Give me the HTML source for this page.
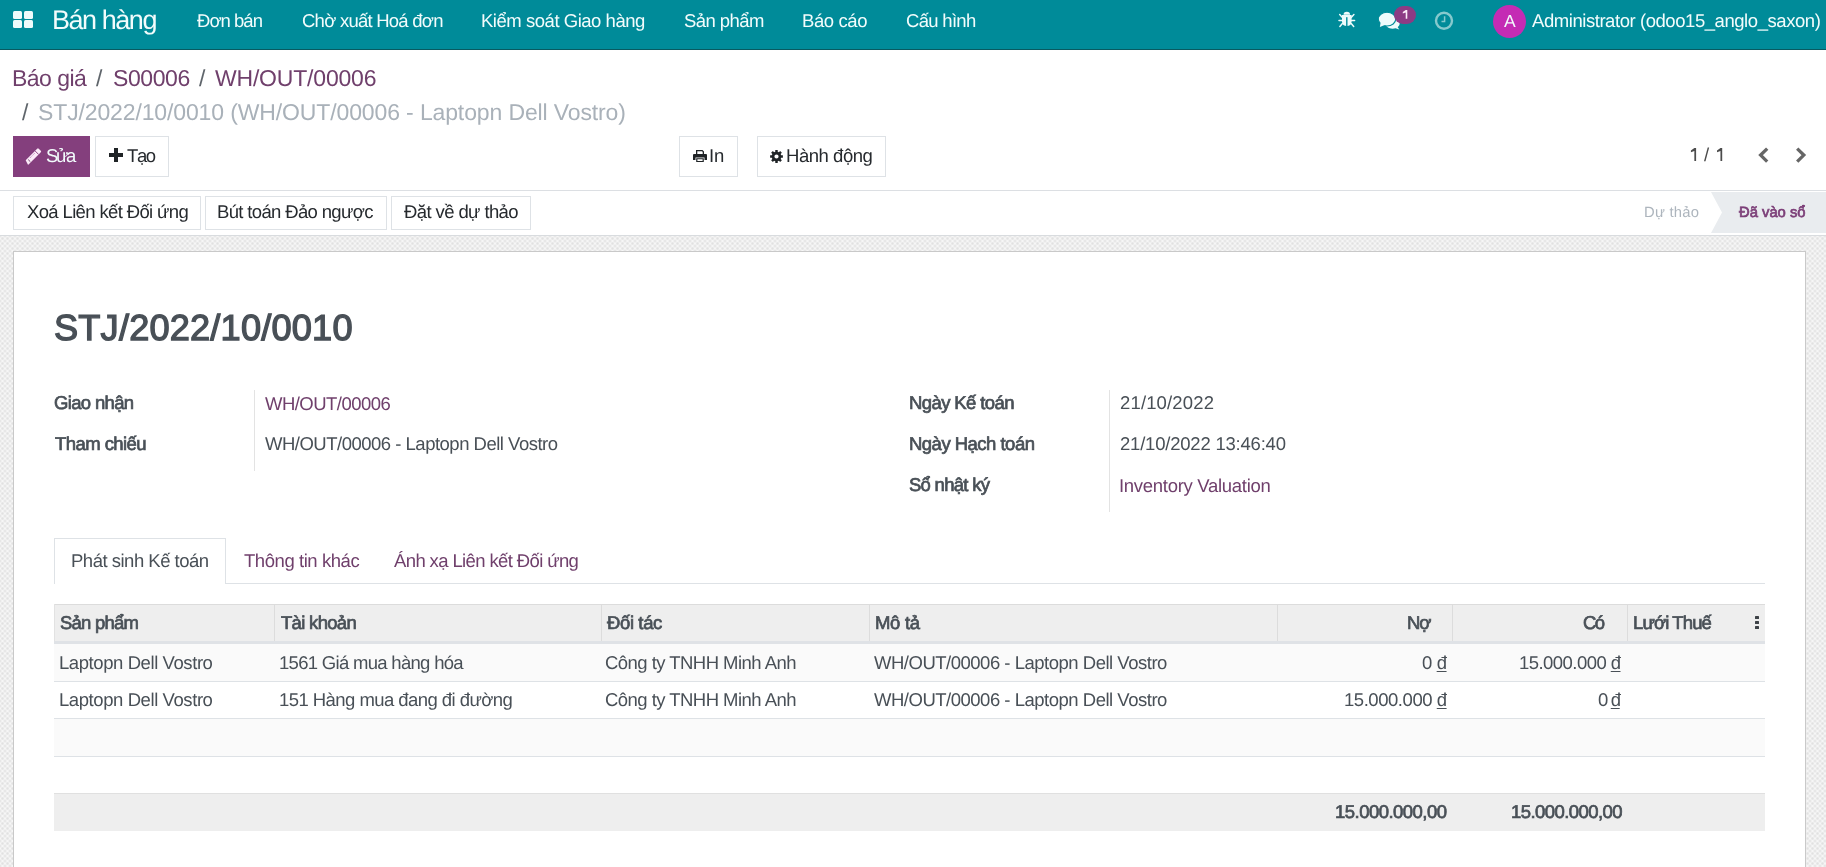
<!DOCTYPE html>
<html><head><meta charset="utf-8"><title>STJ/2022/10/0010</title>
<style>
html,body{margin:0;padding:0}
body{width:1826px;height:867px;overflow:hidden;position:relative;background:#fff;font-family:"Liberation Sans",sans-serif}
.b{position:absolute}
.t{position:absolute;white-space:nowrap;line-height:1;font-family:"Liberation Sans",sans-serif;text-rendering:geometricPrecision;will-change:transform}
</style></head><body>
<div class="b" style="left:0px;top:0px;width:1826px;height:49px;background:#008b99"></div>
<div class="b" style="left:0px;top:49px;width:1826px;height:1px;background:#085a61"></div>
<div class="b" style="left:13px;top:11px;width:9px;height:8px;background:#eefbfb;border-radius:1.5px"></div>
<div class="b" style="left:24px;top:11px;width:9px;height:8px;background:#eefbfb;border-radius:1.5px"></div>
<div class="b" style="left:13px;top:20px;width:9px;height:8px;background:#eefbfb;border-radius:1.5px"></div>
<div class="b" style="left:24px;top:20px;width:9px;height:8px;background:#eefbfb;border-radius:1.5px"></div>
<svg class="b" style="left:1335px;top:5px" width="85" height="30" viewBox="1335 5 85 30">
<g fill="#eefbfb"><path d="M1343.5 14.7 A3.3 3.0 0 0 1 1350.1 14.7 Z"/>
<path d="M1342 15.1 H1351.6 V21.5 C1351.6 24.6 1349.6 26.1 1346.8 26.1 C1344 26.1 1342 24.6 1342 21.5 Z"/></g>
<g stroke="#eefbfb" stroke-width="1.5" stroke-linecap="round"><path d="M1342.4 17.4 L1339.7 14.6 M1342.2 20.6 L1339 20.6 M1342.4 23.6 L1339.9 26.5 M1351.2 17.4 L1353.9 14.6 M1351.4 20.6 L1354.6 20.6 M1351.2 23.6 L1353.7 26.5"/></g>
<rect x="1346.1" y="17.2" width="1.4" height="9" fill="#008b99"/>
<path fill="#eefbfb" d="M1392.5 17.9 C1396.6 17.9 1399.7 20.3 1399.7 23.3 C1399.7 24.9 1398.9 26.2 1397.7 27.2 L1399.3 29.5 L1395.6 28.3 C1394.6 28.6 1393.6 28.7 1392.5 28.7 C1388.5 28.7 1385.3 26.3 1385.3 23.3 C1385.3 20.3 1388.5 17.9 1392.5 17.9 Z"/>
<ellipse cx="1387" cy="19.1" rx="8.75" ry="6.85" fill="#eefbfb" stroke="#008b99" stroke-width="1.1"/>
<path fill="#eefbfb" d="M1380.6 22.6 L1379.9 27.1 L1385.4 24.8 Z"/>
</svg>
<div class="b" style="left:1394px;top:6px;width:22px;height:18px;background:#8c3b84;border-radius:9px"></div>
<svg class="b" style="left:1400px;top:8px" width="10" height="13" viewBox="1400 8 10 13"><path fill="#fbeaf8" d="M1405.7 10.1 H1407.3 V18.7 H1405.7 V12.4 L1402.8 13.4 V12 Z"/></svg>
<svg class="b" style="left:1434px;top:11px" width="20" height="20" viewBox="0 0 20 20">
<circle cx="10" cy="9.7" r="8" fill="none" stroke="#86c9cd" stroke-width="2.4"/>
<path d="M10.6 5.2 V10.5 H7.5" fill="none" stroke="#86c9cd" stroke-width="1.5"/></svg>
<div class="b" style="left:1493px;top:4.5px;width:33px;height:33px;background:#c42bb4;border-radius:50%"></div>
<div class="b" style="left:13px;top:136px;width:77px;height:41px;background:#843f7d"></div>
<svg class="b" style="left:20px;top:142px" width="28" height="28" viewBox="20 142 28 28">
<g transform="translate(26.3 163.2) rotate(-45)">
<path fill="#fbeaf8" d="M0.3 2.5 Q0 2.5 0.1 2.1 L1.7 -2.6 H18 Q19.1 -2.6 19.1 -1.5 V1.4 Q19.1 2.5 18 2.5 Z"/>
<path d="M14.9 -2.7 V2.6" stroke="#843f7d" stroke-width="0.9"/>
<path d="M3.9 -1.2 V1.8" stroke="#5a2a56" stroke-width="0.8"/>
<path d="M6.6 -1.15 H12.9" stroke="#843f7d" stroke-width="0.6" stroke-dasharray="1 0.8"/>
</g></svg>
<div class="b" style="left:95px;top:136px;width:74px;height:41px;border:1px solid #dee2e6;box-sizing:border-box;background:#fff"></div>
<div class="b" style="left:108.5px;top:153px;width:14px;height:4px;background:#1f2326"></div>
<div class="b" style="left:113.5px;top:148px;width:4px;height:14px;background:#1f2326"></div>
<div class="b" style="left:679px;top:136px;width:59px;height:41px;border:1px solid #dee2e6;box-sizing:border-box;background:#fff"></div>
<svg class="b" style="left:692px;top:149px" width="16" height="14" viewBox="0 0 16 14">
<path fill="#1f2326" d="M4 1 H10.5 L12 2.5 V5 H4 Z M5.3 2.2 V5 H10.7 V3 L10 2.2 Z"/>
<path fill="#1f2326" d="M1 6 Q1 5 2 5 H14 Q15 5 15 6 V11 H12.5 V8.5 H3.5 V11 H1 Z"/>
<path fill="#1f2326" d="M4.2 9.3 H11.8 V13 H4.2 Z M5.4 10.3 V12 H10.6 V10.3 Z"/></svg>
<div class="b" style="left:757px;top:136px;width:129px;height:41px;border:1px solid #dee2e6;box-sizing:border-box;background:#fff"></div>
<svg class="b" style="left:770px;top:150px" width="13" height="13" viewBox="0 0 12.4 12.4">
<path fill="#1f2326" fill-rule="evenodd" d="M12.29 5.02 L12.29 7.38 L10.65 7.35 L10.16 8.53 L11.34 9.67 L9.67 11.34 L8.53 10.16 L7.35 10.65 L7.38 12.29 L5.02 12.29 L5.05 10.65 L3.87 10.16 L2.73 11.34 L1.06 9.67 L2.24 8.53 L1.75 7.35 L0.11 7.38 L0.11 5.02 L1.75 5.05 L2.24 3.87 L1.06 2.73 L2.73 1.06 L3.87 2.24 L5.05 1.75 L5.02 0.11 L7.38 0.11 L7.35 1.75 L8.53 2.24 L9.67 1.06 L11.34 2.73 L10.16 3.87 L10.65 5.05 Z M8.2 6.2 A2 2 0 1 0 4.2 6.2 A2 2 0 1 0 8.2 6.2 Z"/></svg>
<svg class="b" style="left:1685px;top:145px" width="45" height="20" viewBox="1685 145 45 20"><path fill="#4c4c4c" d="M1694.35 148.1 H1696.10 V160.9 H1694.35 V150.9 L1690.90 152.2 V150.5 Z"/></svg>
<svg class="b" style="left:1685px;top:145px" width="45" height="20" viewBox="1685 145 45 20"><path fill="#4c4c4c" d="M1720.45 148.1 H1722.20 V160.9 H1720.45 V150.9 L1717.00 152.2 V150.5 Z"/></svg>
<svg class="b" style="left:1757px;top:147px" width="13" height="17" viewBox="0 0 13 17">
<path d="M10.2 1.6 L3.6 8.1 L10.2 14.6" fill="none" stroke="#666666" stroke-width="3.3"/></svg>
<svg class="b" style="left:1794px;top:147px" width="13" height="17" viewBox="0 0 13 17">
<path d="M3.2 1.6 L9.8 8.1 L3.2 14.6" fill="none" stroke="#666666" stroke-width="3.3"/></svg>
<div class="b" style="left:0px;top:190px;width:1826px;height:1px;background:#dcdfe3"></div>
<div class="b" style="left:13px;top:196px;width:188px;height:34px;border:1px solid #dee2e6;box-sizing:border-box;background:#fff"></div>
<div class="b" style="left:205px;top:196px;width:182px;height:34px;border:1px solid #dee2e6;box-sizing:border-box;background:#fff"></div>
<div class="b" style="left:391px;top:196px;width:140px;height:34px;border:1px solid #dee2e6;box-sizing:border-box;background:#fff"></div>
<svg class="b" style="left:1710px;top:192px" width="116" height="41" viewBox="0 0 116 41">
<path d="M1 0 H116 V41 H1 L12 20.5 Z" fill="#e9ecef"/></svg>
<div class="b" style="left:0px;top:235px;width:1826px;height:1px;background:#d9dcdf"></div>
<div class="b" style="left:0px;top:236px;width:1826px;height:631px;background-color:#f6f6f6;background-image:radial-gradient(circle,#e1e1e1 0.6px,rgba(225,225,225,0) 1.9px),radial-gradient(circle,#e1e1e1 0.6px,rgba(225,225,225,0) 1.9px);background-size:5px 5px;background-position:0 0,2.5px 2.5px"></div>
<div class="b" style="left:13px;top:251px;width:1793px;height:640px;background:#fff;border:1px solid #c9c9c9;box-sizing:border-box"></div>
<div class="b" style="left:254px;top:390px;width:1px;height:81px;background:#e3e3e3"></div>
<div class="b" style="left:1109px;top:390px;width:1px;height:122px;background:#e3e3e3"></div>
<div class="b" style="left:54px;top:583px;width:1711px;height:1px;background:#dee2e6"></div>
<div class="b" style="left:54px;top:538px;width:172px;height:46px;border:1px solid #dee2e6;border-bottom:none;box-sizing:border-box;background:#fff"></div>
<div class="b" style="left:54px;top:604px;width:1711px;height:37px;background:#eeeeee"></div>
<div class="b" style="left:54px;top:604px;width:1711px;height:1px;background:#dcdcdc"></div>
<div class="b" style="left:54px;top:604px;width:1px;height:37px;background:#e2e2e2"></div>
<div class="b" style="left:54px;top:641px;width:1711px;height:3px;background:#dfe2e6"></div>
<div class="b" style="left:274px;top:604px;width:1px;height:37px;background:#dcdcdc"></div>
<div class="b" style="left:601px;top:604px;width:1px;height:37px;background:#dcdcdc"></div>
<div class="b" style="left:869px;top:604px;width:1px;height:37px;background:#dcdcdc"></div>
<div class="b" style="left:1277px;top:604px;width:1px;height:37px;background:#dcdcdc"></div>
<div class="b" style="left:1452px;top:604px;width:1px;height:37px;background:#dcdcdc"></div>
<div class="b" style="left:1627px;top:604px;width:1px;height:37px;background:#dcdcdc"></div>
<div class="b" style="left:54px;top:644px;width:1711px;height:37px;background:#fafafa"></div>
<div class="b" style="left:54px;top:681px;width:1711px;height:1px;background:#dee2e6"></div>
<div class="b" style="left:54px;top:718px;width:1711px;height:1px;background:#dee2e6"></div>
<div class="b" style="left:54px;top:719px;width:1711px;height:37px;background:#fafafa"></div>
<div class="b" style="left:54px;top:756px;width:1711px;height:1px;background:#dee2e6"></div>
<div class="b" style="left:54px;top:793px;width:1711px;height:38px;background:#eeeeee"></div>
<div class="b" style="left:54px;top:793px;width:1711px;height:1px;background:#e0e0e0"></div>
<div class="b" style="left:1754.5px;top:615.5px;width:4px;height:3.5px;background:#3d4247;border-radius:0.5px"></div>
<div class="b" style="left:1754.5px;top:620.5px;width:4px;height:3.5px;background:#3d4247;border-radius:0.5px"></div>
<div class="b" style="left:1754.5px;top:625.5px;width:4px;height:3.5px;background:#3d4247;border-radius:0.5px"></div>
<div class="t" style="left:52.46px;top:7px;font-size:27px;letter-spacing:-1.454px;color:#f2fcfc">Bán hàng</div>
<div class="t" style="left:196.85px;top:12px;font-size:18.5px;letter-spacing:-0.973px;color:#f2fcfc">Đơn bán</div>
<div class="t" style="left:302.04px;top:12px;font-size:18.5px;letter-spacing:-0.755px;color:#f2fcfc">Chờ xuất Hoá đơn</div>
<div class="t" style="left:481.47px;top:12px;font-size:18.5px;letter-spacing:-0.467px;color:#f2fcfc">Kiểm soát Giao hàng</div>
<div class="t" style="left:684.11px;top:12px;font-size:18.5px;letter-spacing:-0.557px;color:#f2fcfc">Sản phẩm</div>
<div class="t" style="left:802.27px;top:12px;font-size:18.5px;letter-spacing:-0.389px;color:#f2fcfc">Báo cáo</div>
<div class="t" style="left:906.34px;top:12px;font-size:18.5px;letter-spacing:-0.695px;color:#f2fcfc">Cấu hình</div>
<div class="t" style="left:1532.34px;top:12px;font-size:18.5px;letter-spacing:-0.442px;color:#f2fcfc">Administrator (odoo15_anglo_saxon)</div>
<div class="t" style="left:1503.64px;top:13px;font-size:17.5px;letter-spacing:0.0px;color:#f2fcfc">A</div>
<div class="t" style="left:12.31px;top:67px;font-size:23px;letter-spacing:-0.526px;color:#70406c">Báo giá</div>
<div class="t" style="left:96.19px;top:67px;font-size:23px;letter-spacing:0.0px;color:#5f656b">/</div>
<div class="t" style="left:112.57px;top:67px;font-size:23px;letter-spacing:-0.398px;color:#70406c">S00006</div>
<div class="t" style="left:198.79px;top:67px;font-size:23px;letter-spacing:0.0px;color:#5f656b">/</div>
<div class="t" style="left:215.38px;top:67px;font-size:23px;letter-spacing:-0.195px;color:#70406c">WH/OUT/00006</div>
<div class="t" style="left:21.69px;top:101px;font-size:23px;letter-spacing:0.0px;color:#5f656b">/</div>
<div class="t" style="left:37.67px;top:101px;font-size:23px;letter-spacing:-0.127px;color:#a9b1b9">STJ/2022/10/0010 (WH/OUT/00006 - Laptopn Dell Vostro)</div>
<div class="t" style="left:45.71px;top:147px;font-size:18.5px;letter-spacing:-2.321px;color:#f2fcfc">Sửa</div>
<div class="t" style="left:126.63px;top:147px;font-size:18.5px;letter-spacing:-1.394px;color:#262a2e">Tạo</div>
<div class="t" style="left:709.19px;top:147px;font-size:18.5px;letter-spacing:-0.031px;color:#262a2e">In</div>
<div class="t" style="left:785.87px;top:147px;font-size:18.5px;letter-spacing:-0.459px;color:#262a2e">Hành động</div>
<div class="t" style="left:1703.99px;top:146px;font-size:18.5px;letter-spacing:0.0px;color:#4c4c4c">/</div>
<div class="t" style="left:26.61px;top:203px;font-size:18.5px;letter-spacing:-0.639px;color:#262a2e">Xoá Liên kết Đối ứng</div>
<div class="t" style="left:217.47px;top:203px;font-size:18.5px;letter-spacing:-0.647px;color:#262a2e">Bút toán Đảo ngược</div>
<div class="t" style="left:404.15px;top:203px;font-size:18.5px;letter-spacing:-0.603px;color:#262a2e">Đặt về dự thảo</div>
<div class="t" style="left:1644.16px;top:206px;font-size:14.8px;letter-spacing:0.244px;color:#adb5bd">Dự thảo</div>
<div class="t" style="left:1739.25px;top:206px;font-size:14.8px;letter-spacing:-0.007px;-webkit-text-stroke:0.7px #7c3f78;color:#7c3f78">Đã vào sổ</div>
<div class="t" style="left:54.45px;top:310px;font-size:36.2px;letter-spacing:0.184px;-webkit-text-stroke:1.3px #495057;color:#495057">STJ/2022/10/0010</div>
<div class="t" style="left:54.21px;top:394px;font-size:18.5px;letter-spacing:-0.662px;-webkit-text-stroke:0.7px #495057;color:#495057">Giao nhận</div>
<div class="t" style="left:54.91px;top:435px;font-size:18.5px;letter-spacing:-0.557px;-webkit-text-stroke:0.7px #495057;color:#495057">Tham chiếu</div>
<div class="t" style="left:265.39px;top:395px;font-size:18.5px;letter-spacing:-0.53px;color:#70406c">WH/OUT/00006</div>
<div class="t" style="left:265.39px;top:435px;font-size:18.5px;letter-spacing:-0.499px;color:#495057">WH/OUT/00006 - Laptopn Dell Vostro</div>
<div class="t" style="left:908.75px;top:394px;font-size:18.5px;letter-spacing:-0.604px;-webkit-text-stroke:0.7px #495057;color:#495057">Ngày Kế toán</div>
<div class="t" style="left:908.75px;top:435px;font-size:18.5px;letter-spacing:-0.517px;-webkit-text-stroke:0.7px #495057;color:#495057">Ngày Hạch toán</div>
<div class="t" style="left:909.19px;top:476px;font-size:18.5px;letter-spacing:-0.716px;-webkit-text-stroke:0.7px #495057;color:#495057">Sổ nhật ký</div>
<div class="t" style="left:1119.66px;top:394px;font-size:18.5px;letter-spacing:0.149px;color:#495057">21/10/2022</div>
<div class="t" style="left:1119.66px;top:435px;font-size:18.5px;letter-spacing:-0.209px;color:#495057">21/10/2022 13:46:40</div>
<div class="t" style="left:1118.89px;top:477px;font-size:18.5px;letter-spacing:-0.29px;color:#70406c">Inventory Valuation</div>
<div class="t" style="left:71.07px;top:552px;font-size:18.5px;letter-spacing:-0.494px;color:#495057">Phát sinh Kế toán</div>
<div class="t" style="left:244.23px;top:552px;font-size:18.5px;letter-spacing:-0.439px;color:#70406c">Thông tin khác</div>
<div class="t" style="left:394.34px;top:552px;font-size:18.5px;letter-spacing:-0.62px;color:#70406c">Ánh xạ Liên kết Đối ứng</div>
<div class="t" style="left:60.39px;top:614px;font-size:18.5px;letter-spacing:-0.772px;-webkit-text-stroke:0.7px #495057;color:#495057">Sản phẩm</div>
<div class="t" style="left:280.91px;top:614px;font-size:18.5px;letter-spacing:-0.688px;-webkit-text-stroke:0.7px #495057;color:#495057">Tài khoản</div>
<div class="t" style="left:607.22px;top:614px;font-size:18.5px;letter-spacing:-0.382px;-webkit-text-stroke:0.7px #495057;color:#495057">Đối tác</div>
<div class="t" style="left:874.85px;top:614px;font-size:18.5px;letter-spacing:-0.316px;-webkit-text-stroke:0.7px #495057;color:#495057">Mô tả</div>
<div class="t" style="left:1406.85px;top:614px;font-size:18.5px;letter-spacing:-1.035px;-webkit-text-stroke:0.7px #495057;color:#495057">Nợ</div>
<div class="t" style="left:1583.11px;top:614px;font-size:18.5px;letter-spacing:-1.647px;-webkit-text-stroke:0.7px #495057;color:#495057">Có</div>
<div class="t" style="left:1633.15px;top:614px;font-size:18.5px;letter-spacing:-0.882px;-webkit-text-stroke:0.7px #495057;color:#495057">Lưới Thuế</div>
<div class="t" style="left:58.57px;top:654px;font-size:18.5px;letter-spacing:-0.42px;color:#495057">Laptopn Dell Vostro</div>
<div class="t" style="left:279.28px;top:654px;font-size:18.5px;letter-spacing:-0.695px;color:#495057">1561 Giá mua hàng hóa</div>
<div class="t" style="left:605.04px;top:654px;font-size:18.5px;letter-spacing:-0.537px;color:#495057">Công ty TNHH Minh Anh</div>
<div class="t" style="left:874.49px;top:654px;font-size:18.5px;letter-spacing:-0.49px;color:#495057">WH/OUT/00006 - Laptopn Dell Vostro</div>
<div class="t" style="left:1422.25px;top:654px;font-size:18.5px;letter-spacing:-0.394px;color:#495057">0 <u style="text-underline-offset:2px">đ</u></div>
<div class="t" style="left:1519.28px;top:654px;font-size:18.5px;letter-spacing:-0.544px;color:#495057">15.000.000 <u style="text-underline-offset:2px">đ</u></div>
<div class="t" style="left:58.57px;top:691px;font-size:18.5px;letter-spacing:-0.42px;color:#495057">Laptopn Dell Vostro</div>
<div class="t" style="left:279.28px;top:691px;font-size:18.5px;letter-spacing:-0.553px;color:#495057">151 Hàng mua đang đi đường</div>
<div class="t" style="left:605.04px;top:691px;font-size:18.5px;letter-spacing:-0.537px;color:#495057">Công ty TNHH Minh Anh</div>
<div class="t" style="left:874.49px;top:691px;font-size:18.5px;letter-spacing:-0.49px;color:#495057">WH/OUT/00006 - Laptopn Dell Vostro</div>
<div class="t" style="left:1344.18px;top:691px;font-size:18.5px;letter-spacing:-0.453px;color:#495057">15.000.000 <u style="text-underline-offset:2px">đ</u></div>
<div class="t" style="left:1598.25px;top:691px;font-size:18.5px;letter-spacing:-1.344px;color:#495057">0 <u style="text-underline-offset:2px">đ</u></div>
<div class="t" style="left:1335.49px;top:803px;font-size:18.5px;letter-spacing:-0.528px;-webkit-text-stroke:0.7px #495057;color:#495057">15.000.000,00</div>
<div class="t" style="left:1510.79px;top:803px;font-size:18.5px;letter-spacing:-0.57px;-webkit-text-stroke:0.7px #495057;color:#495057">15.000.000,00</div>
</body></html>
